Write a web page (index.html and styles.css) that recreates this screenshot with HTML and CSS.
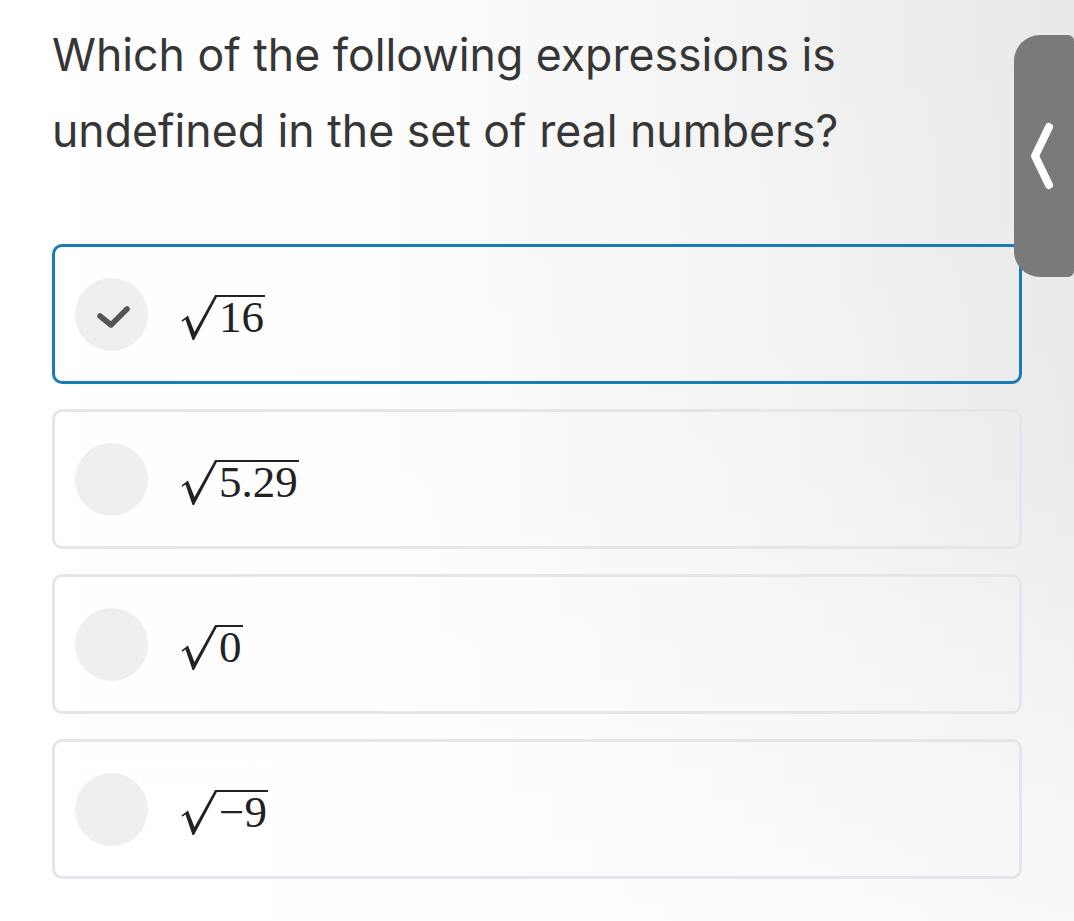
FILE: index.html
```html
<!DOCTYPE html>
<html lang="en">
<head>
<meta charset="utf-8">
<title>Question</title>
<link rel="stylesheet" href="styles.css">
</head>
<body>
<div class="page">
  <h1 class="question">Which of the following expressions is undefined in the set of real numbers?</h1>

  <div class="options">
    <div class="option selected">
      <div class="radio">
        <svg class="check" viewBox="0 0 44 36" width="44" height="36"><path d="M10 20 L21 29 L37 13" fill="none" stroke="#555" stroke-width="5.5" stroke-linecap="round" stroke-linejoin="round"/></svg>
      </div>
      <div class="expr">
        <svg class="rad" viewBox="0 0 36 46" width="36" height="46"><path d="M0.5 25.5 L7 20.5 L13.5 37 L33.8 0.5 L36 0.5 L36 1.8 L13 45 L11.5 45 L4.5 24.5 L1.2 26.8 Z" fill="#222"/></svg>
        <span class="radicand">16</span>
      </div>
    </div>

    <div class="option">
      <div class="radio"></div>
      <div class="expr">
        <svg class="rad" viewBox="0 0 36 46" width="36" height="46"><path d="M0.5 25.5 L7 20.5 L13.5 37 L33.8 0.5 L36 0.5 L36 1.8 L13 45 L11.5 45 L4.5 24.5 L1.2 26.8 Z" fill="#222"/></svg>
        <span class="radicand">5.29</span>
      </div>
    </div>

    <div class="option">
      <div class="radio"></div>
      <div class="expr">
        <svg class="rad" viewBox="0 0 36 46" width="36" height="46"><path d="M0.5 25.5 L7 20.5 L13.5 37 L33.8 0.5 L36 0.5 L36 1.8 L13 45 L11.5 45 L4.5 24.5 L1.2 26.8 Z" fill="#222"/></svg>
        <span class="radicand">0</span>
      </div>
    </div>

    <div class="option">
      <div class="radio"></div>
      <div class="expr">
        <svg class="rad" viewBox="0 0 36 46" width="36" height="46"><path d="M0.5 25.5 L7 20.5 L13.5 37 L33.8 0.5 L36 0.5 L36 1.8 L13 45 L11.5 45 L4.5 24.5 L1.2 26.8 Z" fill="#222"/></svg>
        <span class="radicand">&minus;9</span>
      </div>
    </div>
  </div>
</div>

<div class="side-tab">
  <svg viewBox="0 0 30 70" width="30" height="70"><path d="M20 6 L6 35 L20 64" fill="none" stroke="#fff" stroke-width="8" stroke-linecap="round" stroke-linejoin="round"/></svg>
</div>
</body>
</html>
```

FILE: styles.css
```css
html, body {
  margin: 0;
  padding: 0;
}

body {
  width: 1074px;
  min-height: 921px;
  overflow: hidden;
  position: relative;
  background:
    linear-gradient(to bottom, rgba(255,255,255,0) 0%, rgba(255,255,255,0.15) 50%, rgba(255,255,255,0.75) 100%),
    linear-gradient(to right, #ffffff 0%, #fdfdfd 35%, #f3f3f3 70%, #e8e8e8 100%);
  font-family: Inter, "Liberation Sans", Arial, sans-serif;
}

.page {
  padding: 17px 0 0 52px;
  width: 970px;
}

.question {
  margin: 0;
  width: 880px;
  font-size: 44.6px;
  font-weight: 400;
  line-height: 76px;
  color: #363636;
  letter-spacing: 0;
}

.options {
  margin-top: 75px;
  display: flex;
  flex-direction: column;
  gap: 25px;
}

.option {
  box-sizing: border-box;
  height: 140px;
  width: 970px;
  border: 3px solid #e3e6eb;
  border-radius: 10px;
  display: flex;
  align-items: center;
  padding-left: 20px;
}

.option.selected {
  border-color: #1a7cb4;
}

.radio {
  width: 73px;
  height: 73px;
  border-radius: 50%;
  background: #efefef;
  flex: none;
  display: flex;
  align-items: center;
  justify-content: center;
}

.check {
  display: block;
}

.expr {
  margin-left: 33px;
  display: flex;
  align-items: flex-start;
  margin-top: 8px;
}

.rad {
  display: block;
  flex: none;
}

.radicand {
  display: block;
  margin-left: -2px;
  border-top: 2px solid #222;
  padding: 0 1px 0 4px;
  font-family: "Liberation Serif", "Times New Roman", serif;
  font-size: 45px;
  line-height: 40px;
  color: #222;
}

.side-tab {
  position: absolute;
  top: 35px;
  right: 0;
  width: 60px;
  height: 242px;
  background: #7a7a7a;
  border-radius: 26px 6px 6px 26px;
  display: flex;
  align-items: center;
  justify-content: flex-start;
  padding-left: 15px;
  box-sizing: border-box;
}

.side-tab svg {
  display: block;
}
```
